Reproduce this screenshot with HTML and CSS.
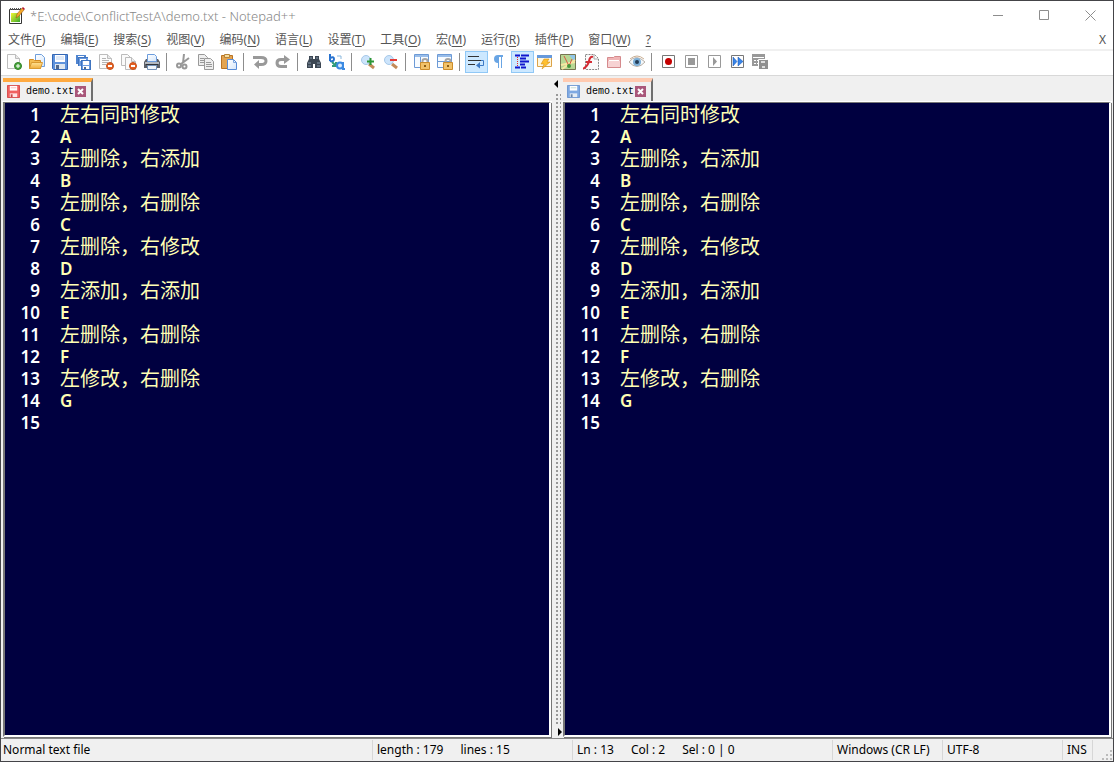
FILE: index.html
```html
<!DOCTYPE html>
<html lang="zh-CN">
<head>
<meta charset="utf-8">
<title>*E:\code\ConflictTestA\demo.txt - Notepad++</title>
<link rel="stylesheet" href="styles.css">
</head>
<body>
<svg class="defs" aria-hidden="true">
  <defs>
    <linearGradient id="green" x1="0" y1="0" x2="1" y2="1"><stop offset="0" stop-color="#f4f830"/><stop offset="1" stop-color="#38a82c"/></linearGradient>
    <linearGradient id="page" x1="0" y1="0" x2="1" y2="1"><stop offset="0" stop-color="#fff"/><stop offset="1" stop-color="#d5e6fa"/></linearGradient>
    <linearGradient id="gold" x1="0" y1="0" x2="0" y2="1"><stop offset="0" stop-color="#ffe396"/><stop offset="1" stop-color="#f0ae3c"/></linearGradient>
    <symbol id="floppy" viewBox="0 0 16 16"><path d="M.5.5h15v15h-14l-1-1z" fill="#5f93dc" stroke="#3567b4"/><path d="M3 1h10v7H3z" fill="#fff"/><path d="M4 3h8M4 5h8" stroke="#c2d5ee"/><path d="M3 10h10v5H3z" fill="#dfe7ef"/><path d="M4 11h3v4H4z" fill="#52698c"/></symbol>
    <symbol id="softfloppy" viewBox="0 0 14 14"><path d="M.5.5h13v13H.5z" fill="#7fa9e2" stroke="#6a94cf"/><path d="M3 1h8v5H3z" fill="#fff"/><path d="M4 3h6" stroke="#bcd8d0"/><path d="M3 9h8v4H3z" fill="#e6eef6"/><path d="M4 10h2v3H4z" fill="#6a87ad"/></symbol>
    <symbol id="doc" viewBox="0 0 16 16"><path d="M1.500.5h8l4 4v10h-12z" fill="#fcfcfc" stroke="#bdbdbd"/><path d="M9.500.5v4h4" fill="#e8e8e8" stroke="#bdbdbd"/></symbol>
    <symbol id="minus" viewBox="0 0 16 16"><circle cx="12" cy="12" r="3.500" fill="#e46022" stroke="#c8521c"/><path d="M10 12h4" stroke="#fff" stroke-width="2"/></symbol>
    <symbol id="lens" viewBox="0 0 16 16"><path d="m9 10 5 4" stroke="#c38b59" stroke-width="3"/><circle cx="6" cy="6" r="4.500" fill="#cce4fb" stroke="#a6c8e9"/></symbol>
    <symbol id="lock" viewBox="0 0 16 16"><path d="M8.500 9V7q0-2 2.500-2t2.500 2v2" fill="none" stroke="#a5a5a5" stroke-width="2"/><path d="M6.500 8.500h9v7h-9z" fill="#f1c26a" stroke="#cb8c2b"/><path d="M11 11v2" stroke="#8a5c14" stroke-width="2"/></symbol>
    <symbol id="close" viewBox="0 0 11 11"><path d="M0 0h11v11H0z" fill="#a9577a"/><path d="m3 3 5 5m0-5L3 8" stroke="#fff" stroke-width="2"/></symbol>
  </defs>
</svg>
<div class="window">
  <header class="title-bar">
    <svg class="app-icon" viewBox="0 0 17 17"><path d="M1.500 2.500h12v14h-12z" fill="#fff" stroke="#343434"/><path d="M3 6h9v9H3z" fill="url(#green)"/><path d="M2 2h11" stroke="#555" stroke-width="2" stroke-dasharray="1 1"/><path d="m8 11 1-4 5-6 2 2-5 6z" fill="#f5a829" stroke="#8c5115" stroke-width=".5"/><path d="m14 1 1-1 2 2-1 1z" fill="#b80d28"/></svg>
    <h1 class="title">*E:\code\ConflictTestA\demo.txt - Notepad++</h1>
    <div class="window-controls">
      <button aria-label="最小化"><svg viewBox="0 0 11 11"><path d="M0 5.500h10"/></svg></button>
      <button aria-label="最大化"><svg viewBox="0 0 11 11"><path d="M.5.5h9v9H.5z"/></svg></button>
      <button aria-label="关闭"><svg viewBox="0 0 11 11"><path d="m.5.5 10 10m0-10-10 10"/></svg></button>
    </div>
  </header>
  <nav class="menu-bar">
    <button>文件(<u>F</u>)</button><button>编辑(<u>E</u>)</button><button>搜索(<u>S</u>)</button><button>视图(<u>V</u>)</button><button>编码(<u>N</u>)</button><button>语言(<u>L</u>)</button><button>设置(<u>T</u>)</button><button>工具(<u>O</u>)</button><button>宏(<u>M</u>)</button><button>运行(<u>R</u>)</button><button>插件(<u>P</u>)</button><button>窗口(<u>W</u>)</button><button><u>?</u></button>
    <button class="close-doc">X</button>
  </nav>
  <div class="toolbar" role="toolbar">
    <button aria-label="新建"><svg viewBox="0 0 16 16"><use href="#doc"/><circle cx="12" cy="12" r="3.500" fill="#4aa83e" stroke="#2f7e27"/><path d="M10 12h4m-2-2v4" stroke="#fff"/></svg></button>
    <button aria-label="打开"><svg viewBox="0 0 16 16"><path d="M6.500.5h6l3 3v9h-9z" fill="url(#page)" stroke="#6f9fdc"/><path d="M.5 5.500h4l1 1h6v8H.5z" fill="#f4bd52" stroke="#d38c25"/><path d="m.5 14.500 2-6h11l-2 6z" fill="url(#gold)" stroke="#d99a30"/></svg></button>
    <button aria-label="保存"><svg viewBox="0 0 16 16"><use href="#floppy"/></svg></button>
    <button aria-label="全部保存"><svg viewBox="0 0 16 16"><path d="M1 1h10v9H1z" fill="#4f84cf"/><path d="M3 2h6v2H3z" fill="#fff"/><path d="M3 3h10v9H3z" fill="#3f74bf"/><path d="M4 4h9v8H4z" fill="#6b9be0"/><path d="M5 5h6v2H5z" fill="#fff"/><path d="M6 6h10v10H6z" fill="#3f74bf"/><path d="M7 7h8v8H7z" fill="#6b9be0"/><path d="M8 7h6v4H8zm0 5h6v3H8z" fill="#fff"/><path d="M9 13h2v2H9z" fill="#52698c"/></svg></button>
    <button aria-label="关闭文件"><svg viewBox="0 0 16 16"><use href="#doc"/><path d="M4 4.500h4M4 6.500h7M4 8.500h6M4 10.500h4" stroke="#b5b5b5"/><use href="#minus"/></svg></button>
    <button aria-label="关闭全部"><svg viewBox="0 0 16 16"><path d="M.5.5h6l3 3v8h-9z" fill="#fafafa" stroke="#bbb"/><path d="M4.500 3.500h6l4 4v8h-10z" fill="#fafafa" stroke="#bbb"/><path d="M10.500 3.500v4h4" fill="#eee" stroke="#bbb"/><use href="#minus"/></svg></button>
    <button aria-label="打印"><svg viewBox="0 0 16 16"><path d="M2 5h12l2 3v6H0V8z" fill="#5b6068"/><path d="M1 8h14v2H1z" fill="#b4b9c0"/><path d="M3.500.5h7l2 2v5h-9z" fill="url(#page)" stroke="#6b9cdd"/><path d="M2 10.500h12" stroke="#30343a"/><path d="M3.500 11.500h9v4h-9z" fill="#f1f6fb" stroke="#7392b8"/></svg></button>
    <i class="sep"></i>
    <button aria-label="剪切"><svg viewBox="0 0 16 16" fill="none" stroke="#989898" stroke-width="2"><path d="M9 0 8 9m6-5-8 6"/><circle cx="4" cy="11.500" r="2"/><circle cx="9.500" cy="12.500" r="2"/></svg></button>
    <button aria-label="复制"><svg viewBox="0 0 16 16" fill="#eee" stroke="#999"><path d="M.5.5h6l3 3v8h-9z"/><path d="M2 4.500h4M2 6.500h5M2 8.500h5"/><path d="M6.500 4.500h6l3 3v8h-9z"/><path d="M8 8.500h5m-5 2h6m-6 2h6"/></svg></button>
    <button aria-label="粘贴"><svg viewBox="0 0 16 16"><path d="M.5 1.500h11v13H.5z" fill="#e3a451" stroke="#b97323"/><path d="M3.500.5h5v3h-5z" fill="#f8de9e" stroke="#b78337"/><path d="M6.500 5.500h6l3 3v7h-9z" fill="url(#page)" stroke="#588cd7"/><path d="M12.500 5.500v3h3" fill="none" stroke="#7aa4df"/></svg></button>
    <i class="sep"></i>
    <button aria-label="撤销"><svg viewBox="0 0 16 16" fill="none" stroke="#999" stroke-width="3"><path d="M1 3.500h8q5 0 5 3.500t-5 3.500H6"/><path d="M7 6v9l-5-4.500z" fill="#999" stroke="none"/></svg></button>
    <button aria-label="重做"><svg viewBox="0 0 16 16" fill="none" stroke="#999" stroke-width="3"><path d="M10 5.500H6q-4 0-4 3.500t4 3.500h6"/><path d="M9 1v9l6-4.500z" fill="#999" stroke="none"/></svg></button>
    <i class="sep"></i>
    <button aria-label="查找"><svg viewBox="0 0 16 16"><path d="M3 2h4v3h2V2h4v3l2 4v5H9v-4H7v4H1V9l2-4z" fill="#3b4652"/><path d="M4 4h2m4 0h2M2 9h3m6 0h3M2 12h3m6 0h3" stroke="#8797aa"/></svg></button>
    <button aria-label="替换"><svg viewBox="0 0 16 16" fill="none"><path d="M1 0v7m0-3q4-2 4 1T1 7" stroke="#2872cf" stroke-width="2"/><path d="m3 8 4 4m0-4v4H3" stroke="#309b7c" stroke-width="2"/><circle cx="11" cy="11.500" r="3" fill="#d9ebff" stroke="#3b8ae2" stroke-width="2"/><path d="M14 8v7h2" stroke="#3b8ae2" stroke-width="2"/><path d="M8 2h4v3" stroke="#8bb8dd"/></svg></button>
    <i class="sep"></i>
    <button aria-label="放大"><svg viewBox="0 0 16 16"><use href="#lens"/><path d="M10.500 4v7M7 7.500h7" stroke="#2b9637" stroke-width="2"/></svg></button>
    <button aria-label="缩小"><svg viewBox="0 0 16 16"><use href="#lens"/><path d="M7 6h7" stroke="#e43a36" stroke-width="2"/></svg></button>
    <i class="sep"></i>
    <button aria-label="同步垂直滚动"><svg viewBox="0 0 16 16"><path d="M.5.5h14v13H.5z" fill="#f7fbff" stroke="#6c9ad6"/><path d="M1 2h13" stroke="#99bde9" stroke-width="2"/><path d="M6.500 3v10" stroke="#6c9ad6"/><use href="#lock"/></svg></button>
    <button aria-label="同步水平滚动"><svg viewBox="0 0 16 16"><path d="M.5.5h14v13H.5z" fill="#f7fbff" stroke="#6c9ad6"/><path d="M1 2h13" stroke="#99bde9" stroke-width="2"/><path d="M1 7.500h13" stroke="#6c9ad6"/><use href="#lock"/></svg></button>
    <i class="sep"></i>
    <button class="on" aria-pressed="true" aria-label="自动换行"><svg viewBox="0 0 16 16" fill="none"><path d="M0 2.500h11M0 6.500h13M0 10.500h7" stroke="#333"/><path d="M13 6.500h2.500v5H12" stroke="#3d79c5"/><path d="m12 8-4 3.500 4 3z" fill="#3d79c5"/></svg></button>
    <button aria-label="显示所有字符"><svg viewBox="0 0 16 16"><path d="M7 9Q3 9 3 5t4-4h5v2H7z" fill="#69a5e4"/><path d="M7.500 2v12m3-12v12" stroke="#69a5e4" stroke-width="1"/></svg></button>
    <button class="on" aria-pressed="true" aria-label="缩进参考线"><svg viewBox="0 0 16 16"><path d="M1 1.500h5m1 0h8M6 4.500h6M6 7.500h9M6 10.500h5M1 13.500h5m1 0h5" stroke="#1016ce" stroke-width="2"/><path d="M3.500 3v10" stroke="#ed2424" stroke-dasharray="1 1"/></svg></button>
    <button aria-label="自定义语言"><svg viewBox="0 0 16 16"><path d="M.5 1.500h14v11H.5z" fill="#fff7df" stroke="#dca348"/><path d="M0 2.500h15" stroke="#6799db" stroke-width="3"/><path d="M7 5h5l-2 3h3l-8 7 2-5H4z" fill="#ffc02f" stroke="#c8820e" stroke-width=".5"/></svg></button>
    <button aria-label="文档地图"><svg viewBox="0 0 16 16"><path d="M.5.5h15v15H.5z" fill="#b8d793" stroke="#777550"/><path d="M9 1h6v7z" fill="#91c6e8"/><path d="m1 11 14-3M2 15 15 6" stroke="#f7e6a2" stroke-width="2"/><path d="m4 2 5 10 3-7" fill="none" stroke="#d95642"/><circle cx="9" cy="12" r="2" fill="#46953b"/></svg></button>
    <button aria-label="函数列表"><svg viewBox="0 0 16 16"><path d="M2.500.5h9l4 4v11h-13z" fill="#fafafa" stroke="#888" stroke-dasharray="2 1"/><path d="M11 1v4h4" fill="none" stroke="#aaa"/><path d="M10 3Q7 2 6 7t-6 8M3 8h6" fill="none" stroke="#d42d35" stroke-width="2"/></svg></button>
    <button aria-label="文件夹工作区"><svg viewBox="0 0 16 16"><path d="M1.500 3.500h6l1-1h6v11h-13z" fill="#f0b4b5" stroke="#d58a8d"/><path d="M2 7h12v6H2z" fill="#f7d2d3"/><path d="M3 6.500h10" stroke="#fff"/></svg></button>
    <button aria-label="监视"><svg viewBox="0 0 16 16"><path d="M0 8q7-9 16 0-8 9-16 0z" fill="#f4f8fb" stroke="#b8afa6"/><circle cx="8" cy="8" r="4" fill="#7cafd8"/><circle cx="8" cy="8" r="2" fill="#233c57"/><path d="M1 5q7-6 14 0" fill="none" stroke="#c9ae92"/></svg></button>
    <i class="sep"></i>
    <button aria-label="录制"><svg viewBox="0 0 16 16"><path d="M2.500 1.500h12v12h-12z" fill="#fff" stroke="#777"/><circle cx="8.500" cy="7.500" r="3.500" fill="#c50000"/></svg></button>
    <button aria-label="停止"><svg viewBox="0 0 16 16"><path d="M2.500 1.500h12v12h-12z" fill="#fff" stroke="#999"/><path d="M5 4h7v7H5z" fill="#999"/></svg></button>
    <button aria-label="播放"><svg viewBox="0 0 16 16"><path d="M2.500 1.500h12v12h-12z" fill="#fff" stroke="#999"/><path d="m7 3 4 4.500L7 12z" fill="#999"/></svg></button>
    <button aria-label="多次播放"><svg viewBox="0 0 16 16"><path d="M2.500 1.500h12v12h-12z" fill="#fff" stroke="#777"/><path d="m4 3 4 4.500L4 12zm5 0 5 4.500L9 12z" fill="#3785e9" stroke="#164ea8" stroke-width=".5"/></svg></button>
    <button aria-label="保存宏"><svg viewBox="0 0 16 16"><path d="M0 0h13v12H0z" fill="#999"/><path d="M1 3.500h11M2 6.500h2m1 0h2M2 9.500h2m1 0h2" stroke="#fff"/><path d="M6.500 5.500h9v9h-9z" fill="#999" stroke="#fff"/><path d="M7 6h9v9H7z" fill="#8f8f8f"/><path d="M9 7h4v2H9zm1 5h3v2h-3z" fill="#ddd"/></svg></button>
  </div>
  <main class="workspace">
    <section class="pane active">
      <div class="tabs" role="tablist"><div class="tab" role="tab" aria-selected="true"><svg class="state" viewBox="0 0 14 14"><path d="M.5.5h13v13H.5z" fill="#f06161" stroke="#d64747"/><path d="M3 1h8v5H3z" fill="#fff"/><path d="M4 3h6" stroke="#ffb7b7"/><path d="M3 9h8v4H3z" fill="#ffe5e5"/><path d="M4 10h2v3H4z" fill="#c74646"/></svg><span>demo.txt</span><button aria-label="关闭标签"><svg viewBox="0 0 11 11"><use href="#close"/></svg></button></div></div>
      <div class="editor">
        <div class="gutter"><div>1</div><div>2</div><div>3</div><div>4</div><div>5</div><div>6</div><div>7</div><div>8</div><div>9</div><div>10</div><div>11</div><div>12</div><div>13</div><div>14</div><div>15</div></div>
        <div class="code" contenteditable="true" spellcheck="false" role="textbox" aria-multiline="true" aria-label="demo.txt 左"><div class="han">左右同时修改</div><div>A</div><div class="han">左删除，右添加</div><div>B</div><div class="han">左删除，右删除</div><div>C</div><div class="han">左删除，右修改</div><div>D</div><div class="han">左添加，右添加</div><div>E</div><div class="han">左删除，右删除</div><div>F</div><div class="han">左修改，右删除</div><div>G</div><div><br></div></div>
      </div>
    </section>
    <div class="splitter" role="separator"><svg viewBox="0 0 5 8"><path d="M4 0v8L0 4z"/></svg><div class="grip"></div><svg class="right" viewBox="0 0 5 8"><path d="M1 0v8l4-4z"/></svg></div>
    <section class="pane">
      <div class="tabs" role="tablist"><div class="tab" role="tab" aria-selected="true"><svg class="state" viewBox="0 0 14 14"><use href="#softfloppy"/></svg><span>demo.txt</span><button aria-label="关闭标签"><svg viewBox="0 0 11 11"><use href="#close"/></svg></button></div></div>
      <div class="editor">
        <div class="gutter"><div>1</div><div>2</div><div>3</div><div>4</div><div>5</div><div>6</div><div>7</div><div>8</div><div>9</div><div>10</div><div>11</div><div>12</div><div>13</div><div>14</div><div>15</div></div>
        <div class="code" contenteditable="true" spellcheck="false" role="textbox" aria-multiline="true" aria-label="demo.txt 右"><div class="han">左右同时修改</div><div>A</div><div class="han">左删除，右添加</div><div>B</div><div class="han">左删除，右删除</div><div>C</div><div class="han">左删除，右修改</div><div>D</div><div class="han">左添加，右添加</div><div>E</div><div class="han">左删除，右删除</div><div>F</div><div class="han">左修改，右删除</div><div>G</div><div><br></div></div>
      </div>
    </section>
  </main>
  <footer class="status-bar">
    <div class="doc-type">Normal text file</div>
    <div class="doc-size"><span>length : 179</span><span>lines : 15</span></div>
    <div class="cursor"><span>Ln : 13</span><span>Col : 2</span><span>Sel : 0 | 0</span></div>
    <div class="eol">Windows (CR LF)</div>
    <div class="encoding">UTF-8</div>
    <div class="mode">INS</div>
    <div class="corner"><svg viewBox="0 0 10 10"><path d="M8 0h2v2H8zM4 4h2v2H4zm4 0h2v2H8zM0 8h2v2H0zm4 0h2v2H4zm4 0h2v2H8z" fill="#bbb"/></svg></div>
  </footer>
</div>
</body>
</html>
```
FILE: styles.css
```css
* { box-sizing: border-box; }
body { margin: 0; font-family: "Noto Sans", "Noto Sans CJK SC", sans-serif; }
button { border: 0; padding: 0; background: none; color: inherit; font: inherit; }
svg { display: block; flex: none; }
.defs { position: absolute; width: 0; height: 0; }
.window { display: flex; flex-direction: column; height: 100vh; border: 1px solid #444448; background: #fff; overflow: hidden; }

.title-bar { display: flex; align-items: center; height: 29px; padding-left: 7px; flex: none; }
.app-icon { width: 17px; height: 17px; }
.title { flex: 1; margin: 0 0 0 5px; color: #888; font-size: 13px; font-weight: 300; line-height: 20px; white-space: nowrap; }
.window-controls { display: flex; }
.window-controls button { display: flex; justify-content: center; align-items: center; width: 46px; height: 28px; }
.window-controls svg { width: 11px; height: 11px; fill: none; stroke: #8d8d8d; }

.menu-bar { display: flex; align-items: center; gap: 15px; height: 21px; padding: 0 7px; flex: none; border-bottom: 2px solid #f0f0f0; color: #555; font-size: 12px; line-height: 18px; white-space: nowrap; }
.menu-bar u { text-underline-offset: 2px; }
.close-doc { margin-left: auto; }

.toolbar { display: flex; align-items: flex-start; height: 25px; padding-left: 2px; flex: none; border-bottom: 1px solid #d8d8d8; }
.toolbar button { display: flex; align-items: center; justify-content: center; width: 23px; height: 22px; padding-right: 1px; flex: none; }
.toolbar button.on { border: 1px solid #90c8f6; background: #cce8ff; }
.toolbar svg { width: 16px; height: 16px; }
.sep { width: 1px; height: 18px; margin: 2px 5px 0 2px; background: #8d8d8d; flex: none; }

.workspace { display: flex; flex: 1; min-height: 0; padding: 0 1px; background: #f0f0f0; }
.pane { display: flex; flex: 1; flex-direction: column; min-width: 0; }
.tabs { display: flex; height: 26px; padding: 2px 1px 0; flex: none; border-bottom: 1px solid #fff; }
.tab { display: flex; align-items: center; width: 90px; padding: 0 0 1px 4px; border-top: 4px solid #ffcab0; border-right: 2px solid #6f6f6f; color: #000; font: 10px "Liberation Mono", monospace; }
.active .tab { border-top-color: #ffaa40; }
.tab .state { width: 13px; height: 13px; }
.tab span { margin-left: 6px; }
.tab button svg { width: 11px; height: 11px; }
.tab button { margin-left: 1px; }
.editor { display: flex; flex: 1; min-height: 0; margin: 0 1px 1px; padding-top: 1px; border: 2px solid; border-color: #777 #fff #fff #777; border-top-width: 1px; box-shadow: 1px 1px 0 #777; background: #000040; color: #ffffb4; font: 600 17px/22px "Noto Sans", sans-serif; overflow: hidden; }
.gutter { width: 35px; color: #fff; text-align: right; }
.gutter div, .code div { height: 22px; }
.code { flex: 1; padding-left: 20px; outline: 0; white-space: pre; }
.code .han { font: 400 20px/20px "Noto Sans CJK SC", sans-serif; overflow: hidden; }
.splitter { display: flex; flex-direction: column; align-items: flex-start; gap: 4px; width: 10px; padding: 4px 0 2px 2px; flex: none; }
.splitter svg { width: 5px; height: 8px; }
.splitter .right { align-self: flex-end; }
.grip { flex: 1; width: 7px; background: conic-gradient(from 90deg at 50% 50%, #999 25%, transparent 0) 0 0 / 4px 4px; }

.status-bar { display: flex; align-items: center; height: 23px; flex: none; border-top: 1px solid #888; background: #f0f0f0; color: #000; font-size: 12px; line-height: 20px; white-space: nowrap; }
.status-bar > div { display: flex; gap: 17px; height: 20px; padding-left: 4px; border-left: 1px solid #d7d7d7; flex: none; }
.status-bar > .doc-type { flex: 1; padding-left: 2px; border: 0; }
.status-bar > .doc-size { width: 200px; }
.status-bar > .cursor { width: 260px; }
.status-bar > .eol { width: 110px; }
.status-bar > .encoding { width: 120px; }
.status-bar > .mode { width: 30px; }
.status-bar > .corner { align-items: flex-end; width: 21px; padding-left: 9px; }
.corner svg { width: 10px; height: 10px; }
```
